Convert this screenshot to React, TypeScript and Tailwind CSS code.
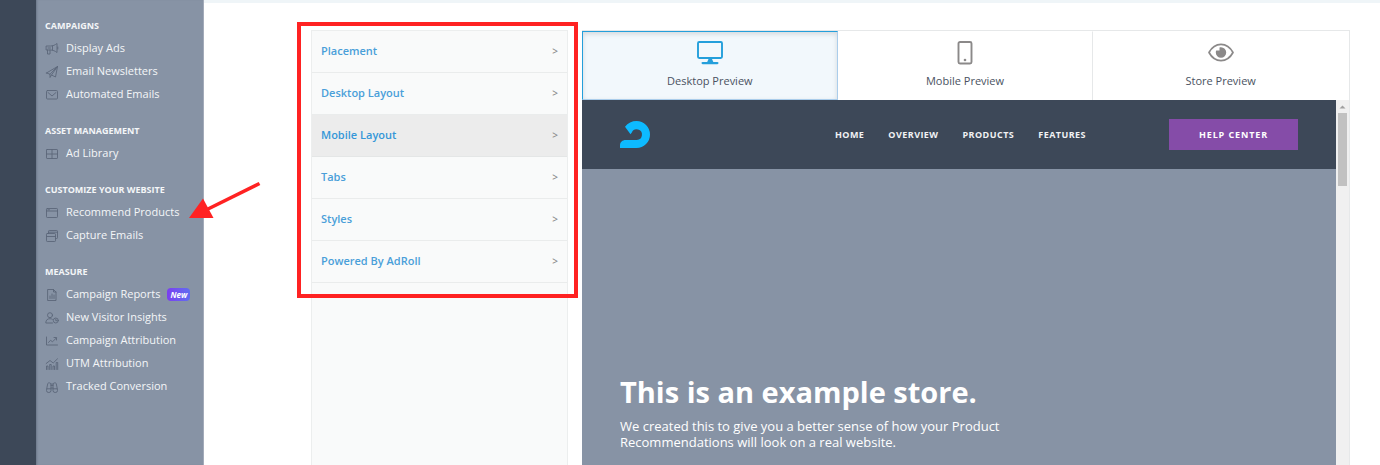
import React from "react";

function Icon({ children }: { children: React.ReactNode }) {
  return (
    <svg
      viewBox="0 0 14 14"
      className="h-3.5 w-3.5 shrink-0 text-[#5b6779]"
      fill="none"
      stroke="currentColor"
      strokeWidth="0.9"
      strokeLinejoin="round"
      strokeLinecap="round"
      aria-hidden="true"
    >
      {children}
    </svg>
  );
}

const icons = {
  megaphone: (
    <>
      <path d="M1.500 4H5.500C8 4 10 3 12 1.500V10.500C10 9 8 8 5.500 8H1.500ZM2.500 8V12H5V8M7.500 3.800V8.200M12.800 5v2" />
      <path d="M3 6h2.500" />
    </>
  ),
  plane: <path d="M1.500 8l11-6.500L10.500 12 6.500 10 5 12.500V9.200L1.500 8zM12.500 1.500L5 9.200M12.500 1.500L6.500 10" />,
  mail: (
    <>
      <rect x="1.500" y="2.500" width="11" height="8.500" rx="1" />
      <path d="M3 4.500l4 3.500 4-3.500" />
    </>
  ),
  grid: (
    <>
      <rect x="1.500" y="2.500" width="11" height="9" rx="0.600" />
      <path d="M7 2.500v9M1.500 7h11" />
    </>
  ),
  window: (
    <>
      <rect x="1.500" y="2.500" width="11" height="9" rx="0.800" />
      <path d="M1.500 5h11M3 3.800h1.500" />
    </>
  ),
  windows: (
    <>
      <rect x="1.500" y="4.500" width="9" height="8" rx="0.800" />
      <path d="M1.500 7.500h9M3.500 4.500V2.300q0-.8.8-.8h7.400q.8 0 .8.8v6.400q0 .8-.8.800h-1.200M3.500 3.200h9" />
    </>
  ),
  report: (
    <>
      <path d="M3 1.500h5.500L11 4v8.500H3zM8.500 1.500V4H11" />
      <path d="M5 10.500V8M7 10.500V6M9 10.500V7" />
    </>
  ),
  visitor: (
    <>
      <circle cx="5" cy="4.200" r="2.500" />
      <path d="M7.500 12H.8c0-3 1.600-4.300 4.200-4.300 1 0 1.800.2 2.400.6" />
      <circle cx="10.800" cy="9.500" r="2.500" />
      <path d="M10.800 8.200v1.500h1.100" />
    </>
  ),
  trend: <path d="M1.500 3v8h11M3.500 8.500l2-2.200 2 1.500 3.800-3.800M9 3.500h2.500V6" />,
  bars: (
    <>
      <path d="M1.500 12.500V9H3v3.500M4.700 12.500v-5h1.500v5M8 12.500V9h1.500v3.500M11.200 12.500v-7h1.500v7" />
      <path d="M1.200 6.500L5 3.500l3.200 2.500 4.300-4.200" />
    </>
  ),
  binoculars: (
    <path d="M6 4v6.500a2.200 2 0 0 1-4.500 0C1.500 8 2.500 6 2.800 3.500 3 2.500 6 2.500 6 4zM8 4v6.500a2.200 2 0 0 0 4.500 0C12.500 8 11.500 6 11.200 3.500 11 2.500 8 2.500 8 4zM6 5.500h2M6 8h2M2 8.800h4M8 8.800h4" />
  ),
};

type Item = { label: string; icon: keyof typeof icons; badge?: string; arrow?: boolean };

const sections: { title: string; items: Item[] }[] = [
  {
    title: "CAMPAIGNS",
    items: [
      { label: "Display Ads", icon: "megaphone" },
      { label: "Email Newsletters", icon: "plane" },
      { label: "Automated Emails", icon: "mail" },
    ],
  },
  { title: "ASSET MANAGEMENT", items: [{ label: "Ad Library", icon: "grid" }] },
  {
    title: "CUSTOMIZE YOUR WEBSITE",
    items: [
      { label: "Recommend Products", icon: "window", arrow: true },
      { label: "Capture Emails", icon: "windows" },
    ],
  },
  {
    title: "MEASURE",
    items: [
      { label: "Campaign Reports", icon: "report", badge: "New" },
      { label: "New Visitor Insights", icon: "visitor" },
      { label: "Campaign Attribution", icon: "trend" },
      { label: "UTM Attribution", icon: "bars" },
      { label: "Tracked Conversion", icon: "binoculars" },
    ],
  },
];

function Sidebar() {
  return (
    <nav
      aria-label="Main"
      className="flex w-[168px] shrink-0 flex-col gap-[15px] border-r border-[#a3abb9] bg-[#8793a5] pt-4 pl-[9px] shadow-[inset_2px_0_2px_-1px_#6d788b]"
    >
      {sections.map((s) => (
        <section key={s.title}>
          <h2 className="mb-0.5 text-[9px] leading-[19px] font-bold whitespace-nowrap text-[#f4f6f8]">{s.title}</h2>
          <ul>
            {s.items.map((item) => (
              <li key={item.label} className="relative">
                <a href="#" className="flex h-[23px] items-center gap-[7px] text-[11px] whitespace-nowrap text-[#f4f6f8]">
                  <Icon>{icons[item.icon]}</Icon>
                  {item.label}
                  {item.badge && (
                    <span className="rounded bg-linear-to-r from-[#7a3df0] to-[#5f6cf0] px-[3px] text-[8px] leading-[13px] font-bold text-white italic">
                      {item.badge}
                    </span>
                  )}
                </a>
                {item.arrow && (
                  <svg viewBox="0 0 74 38" className="pointer-events-none absolute -top-5 left-36 z-10 h-[38px] w-[74px]" aria-hidden="true">
                    <path d="M70.500 2.500L18 28.500" stroke="#ff2222" strokeWidth="3.600" />
                    <path d="M0 37L14 17.500L24.500 37Z" fill="#ff2222" />
                  </svg>
                )}
              </li>
            ))}
          </ul>
        </section>
      ))}
    </nav>
  );
}

const settings = ["Placement", "Desktop Layout", "Mobile Layout", "Tabs", "Styles", "Powered By AdRoll"];

function SettingsPanel() {
  return (
    <aside className="w-[257px] shrink-0 border-x border-t border-[#eceeee] bg-[#f9fafa]">
      <div className="relative">
        <ul>
          {settings.map((label) => (
            <li key={label}>
              <button
                type="button"
                className={
                  "flex h-[42px] w-full items-center justify-between border-b px-[9px] text-[11px] font-semibold " +
                  (label === "Mobile Layout" ? "border-[#e4e6e6] bg-[#ececec] text-[#3597d8]" : "border-[#eaecec] text-[#4a9fd9]")
                }
              >
                {label}
                <span className="text-[10px] text-[#8c8c8c]">&gt;</span>
              </button>
            </li>
          ))}
        </ul>
        <div className="pointer-events-none absolute -top-[9px] -right-[11px] -bottom-[15px] -left-[15px] z-10 border-4 border-[#ff2222]" />
      </div>
    </aside>
  );
}

function DesktopIcon() {
  return (
    <svg viewBox="0 0 26 24" className="h-6 w-[26px]" aria-hidden="true">
      <rect x="1" y="1" width="24" height="16" rx="1.200" fill="none" stroke="#249fdb" strokeWidth="1.900" />
      <path d="M11.500 18h3.500l1.500 3.500h-6.500z" fill="#249fdb" />
      <rect x="4.500" y="21" width="17" height="2.200" rx="1.100" fill="#249fdb" />
    </svg>
  );
}

function MobileIcon() {
  return (
    <svg viewBox="0 0 26 24" className="h-6 w-[26px]" aria-hidden="true">
      <rect x="6.500" y="1" width="13" height="21.500" rx="1.500" fill="none" stroke="#8b8989" strokeWidth="1.900" />
      <circle cx="13" cy="19" r="1.300" fill="#8b8989" />
    </svg>
  );
}

function EyeIcon() {
  return (
    <svg viewBox="0 0 26 24" className="h-6 w-[26px]" aria-hidden="true">
      <path d="M1 11.500C4 6 8.200 3.400 13 3.400S22 6 25 11.500c-3 5.500-7.200 8.100-12 8.100S4 17 1 11.500z" fill="none" stroke="#8b8989" strokeWidth="1.700" strokeLinejoin="round" />
      <path d="M13 6.300a5.200 5.200 0 1 1-5.200 5.200c0-.7.100-1.300.4-1.900h3.300V6.500C12 6.400 12.500 6.300 13 6.300z" fill="#8b8989" />
    </svg>
  );
}

const tabs = [
  { label: "Desktop Preview", icon: <DesktopIcon />, active: true },
  { label: "Mobile Preview", icon: <MobileIcon />, active: false },
  { label: "Store Preview", icon: <EyeIcon />, active: false },
];

function Preview() {
  return (
    <section className="flex min-w-0 flex-1 flex-col border-t border-r border-[#e6e8e9]">
      <div role="tablist" className="grid h-[69px] grid-cols-3">
        {tabs.map((t) => (
          <button
            key={t.label}
            type="button"
            role="tab"
            aria-selected={t.active}
            className={
              "flex flex-col items-center gap-2 pt-[9px] text-[11px] leading-4 font-medium text-[#4a5261] " +
              (t.active
                ? "border border-t-[#249fdb] border-r-[#aacdeb] border-b-[#aacdeb] border-l-[#249fdb] bg-[#f2f8fc] shadow-[inset_0_2px_5px_rgba(0,0,0,0.13)]"
                : "border-t border-r border-t-transparent border-r-[#e6e8e9] bg-white last:border-r-transparent")
            }
          >
            {t.icon}
            {t.label}
          </button>
        ))}
      </div>
      <div className="flex flex-1">
        <div className="flex min-w-0 flex-1 flex-col bg-[#8793a5]">
          <header className="flex h-[69px] items-center bg-[#3d4858] px-[38px]">
            <svg viewBox="0 0 30 27" className="h-[27px] w-[30px]" role="img" aria-label="AdRoll">
              <path
                d="M5 5.800C7.800 2 12 0 16.500 0A13.500 13.500 0 0 1 16.500 27H0V24.200C0 21 2.500 18.900 5.500 18.900H16.800A5.300 5.300 0 1 0 11.800 11.500L10.500 13.200Z"
                fill="#0dbaff"
              />
            </svg>
            <nav aria-label="Store" className="ml-auto flex gap-6 text-[9px] font-bold tracking-wider text-[#f1f2f4]">
              <a href="#">HOME</a>
              <a href="#">OVERVIEW</a>
              <a href="#">PRODUCTS</a>
              <a href="#">FEATURES</a>
            </nav>
            <button type="button" className="ml-[83px] h-[31px] w-[129px] bg-[#854ca8] text-[9px] font-bold tracking-widest text-white">
              HELP CENTER
            </button>
          </header>
          <div className="px-[38px] pt-[203px] text-white">
            <h1 className="text-[29px] leading-10 font-bold">This is an example store.</h1>
            <p className="mt-1.5 max-w-[400px] text-[13px] leading-4">
              We created this to give you a better sense of how your Product Recommendations will look on a real website.
            </p>
          </div>
        </div>
        <div className="flex w-[13px] shrink-0 flex-col items-center bg-[#f0f0f0]" aria-hidden="true">
          <svg viewBox="0 0 13 13" className="h-[13px] w-[13px]">
            <path d="M3.500 8.500L6.500 5.500L9.500 8.500Z" fill="#a0a0a0" />
          </svg>
          <div className="h-[73px] w-[9px] bg-[#c1c1c1]" />
        </div>
      </div>
    </section>
  );
}

export default function App() {
  return (
    <div className="flex min-h-screen bg-white font-['Open_Sans','Noto_Sans',sans-serif]">
      <div className="w-9 shrink-0 bg-[#3d4858]" />
      <Sidebar />
      <div className="flex min-w-0 flex-1 flex-col">
        <div className="h-[3px] bg-[#eff5f8]" />
        <main className="flex flex-1 gap-3.5 pt-[27px] pr-[30px] pl-[107px]">
          <SettingsPanel />
          <Preview />
        </main>
      </div>
    </div>
  );
}
